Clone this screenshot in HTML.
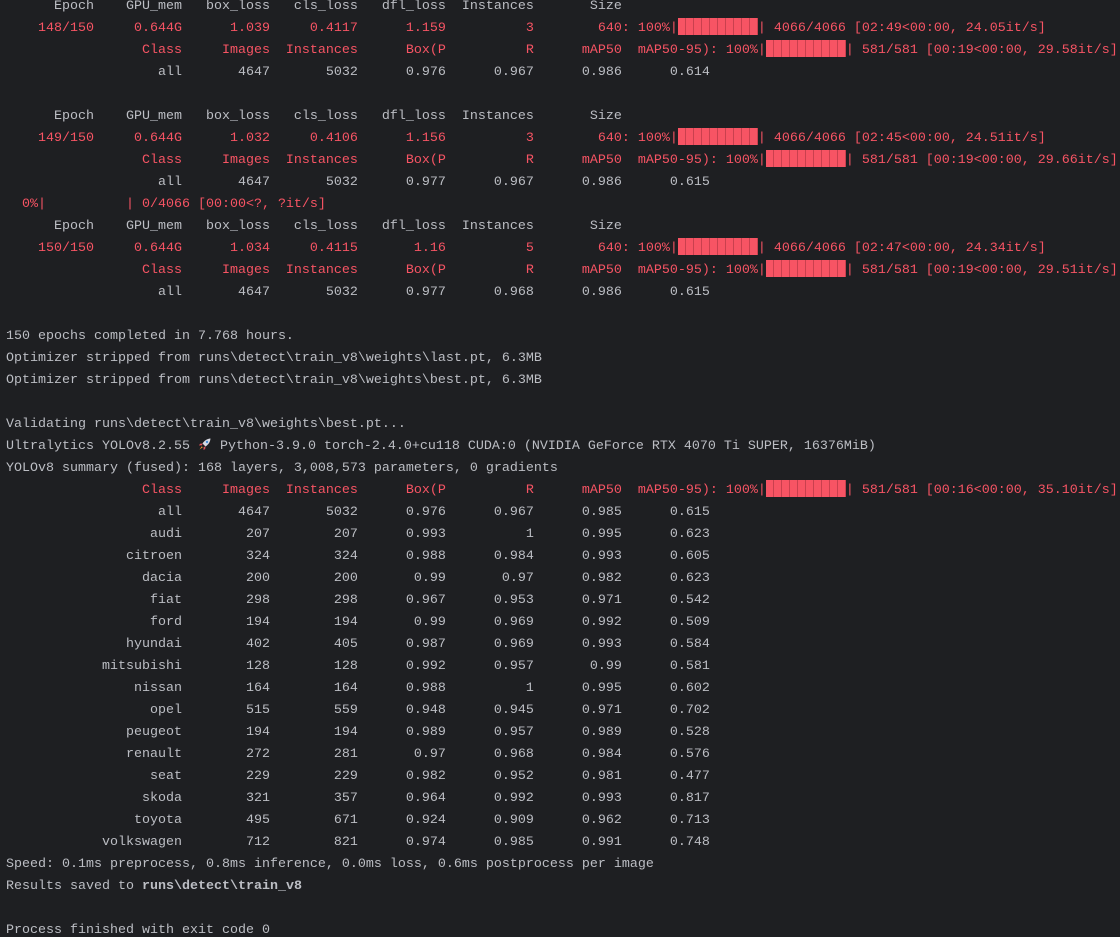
<!DOCTYPE html>
<html><head><meta charset="utf-8"><style>
html,body{margin:0;padding:0;background:#1e1f22;width:1120px;height:937px;overflow:hidden}
pre{margin:-4px 0 0 6px;font-family:"Liberation Mono","DejaVu Sans Mono",monospace;font-size:13.33px;line-height:22px;color:#bcbec4;white-space:pre}
.r{color:#f75464}
.bar{display:inline-block;width:80px;height:17px;vertical-align:-4px;background:repeating-linear-gradient(90deg,#f75464 0 7px,#c9404e 7px 8px)}
b{font-weight:bold}
.rk{display:inline-block;width:14px;height:14px;vertical-align:-2px}
</style></head><body><pre>      Epoch    GPU_mem   box_loss   cls_loss   dfl_loss  Instances       Size
<span class="r">    148/150     0.644G      1.039     0.4117      1.159          3        640: 100%|<span class="bar"></span>| 4066/4066 [02:49&lt;00:00, 24.05it/s]</span>
<span class="r">                 Class     Images  Instances      Box(P          R      mAP50  mAP50-95): 100%|<span class="bar"></span>| 581/581 [00:19&lt;00:00, 29.58it/s]</span>
                   all       4647       5032      0.976      0.967      0.986      0.614

      Epoch    GPU_mem   box_loss   cls_loss   dfl_loss  Instances       Size
<span class="r">    149/150     0.644G      1.032     0.4106      1.156          3        640: 100%|<span class="bar"></span>| 4066/4066 [02:45&lt;00:00, 24.51it/s]</span>
<span class="r">                 Class     Images  Instances      Box(P          R      mAP50  mAP50-95): 100%|<span class="bar"></span>| 581/581 [00:19&lt;00:00, 29.66it/s]</span>
                   all       4647       5032      0.977      0.967      0.986      0.615
<span class="r">  0%|          | 0/4066 [00:00&lt;?, ?it/s]</span>
      Epoch    GPU_mem   box_loss   cls_loss   dfl_loss  Instances       Size
<span class="r">    150/150     0.644G      1.034     0.4115       1.16          5        640: 100%|<span class="bar"></span>| 4066/4066 [02:47&lt;00:00, 24.34it/s]</span>
<span class="r">                 Class     Images  Instances      Box(P          R      mAP50  mAP50-95): 100%|<span class="bar"></span>| 581/581 [00:19&lt;00:00, 29.51it/s]</span>
                   all       4647       5032      0.977      0.968      0.986      0.615

150 epochs completed in 7.768 hours.
Optimizer stripped from runs\detect\train_v8\weights\last.pt, 6.3MB
Optimizer stripped from runs\detect\train_v8\weights\best.pt, 6.3MB

Validating runs\detect\train_v8\weights\best.pt...
Ultralytics YOLOv8.2.55 <svg class="rk" viewBox="0 0 14 14"><path d="M12.5 1.5C9 1.8 6.5 3.5 4.5 6.5L7.5 9.5C10.5 7.5 12.2 5 12.5 1.5Z" fill="#d8d8e0"/><path d="M4.5 6.5L2 6.8 1 8.5 4 8.3Z M7.5 9.5L7.2 12 5.5 13 5.7 10Z" fill="#e0505a"/><path d="M3.8 9.2L1.5 12.5 4.8 10.2Z" fill="#f0a030"/><circle cx="9" cy="5" r="1.2" fill="#4a8fd8"/></svg> Python-3.9.0 torch-2.4.0+cu118 CUDA:0 (NVIDIA GeForce RTX 4070 Ti SUPER, 16376MiB)
YOLOv8 summary (fused): 168 layers, 3,008,573 parameters, 0 gradients
<span class="r">                 Class     Images  Instances      Box(P          R      mAP50  mAP50-95): 100%|<span class="bar"></span>| 581/581 [00:16&lt;00:00, 35.10it/s]</span>
                   all       4647       5032      0.976      0.967      0.985      0.615
                  audi        207        207      0.993          1      0.995      0.623
               citroen        324        324      0.988      0.984      0.993      0.605
                 dacia        200        200       0.99       0.97      0.982      0.623
                  fiat        298        298      0.967      0.953      0.971      0.542
                  ford        194        194       0.99      0.969      0.992      0.509
               hyundai        402        405      0.987      0.969      0.993      0.584
            mitsubishi        128        128      0.992      0.957       0.99      0.581
                nissan        164        164      0.988          1      0.995      0.602
                  opel        515        559      0.948      0.945      0.971      0.702
               peugeot        194        194      0.989      0.957      0.989      0.528
               renault        272        281       0.97      0.968      0.984      0.576
                  seat        229        229      0.982      0.952      0.981      0.477
                 skoda        321        357      0.964      0.992      0.993      0.817
                toyota        495        671      0.924      0.909      0.962      0.713
            volkswagen        712        821      0.974      0.985      0.991      0.748
Speed: 0.1ms preprocess, 0.8ms inference, 0.0ms loss, 0.6ms postprocess per image
Results saved to <b>runs\detect\train_v8</b>

Process finished with exit code 0
</pre></body></html>
